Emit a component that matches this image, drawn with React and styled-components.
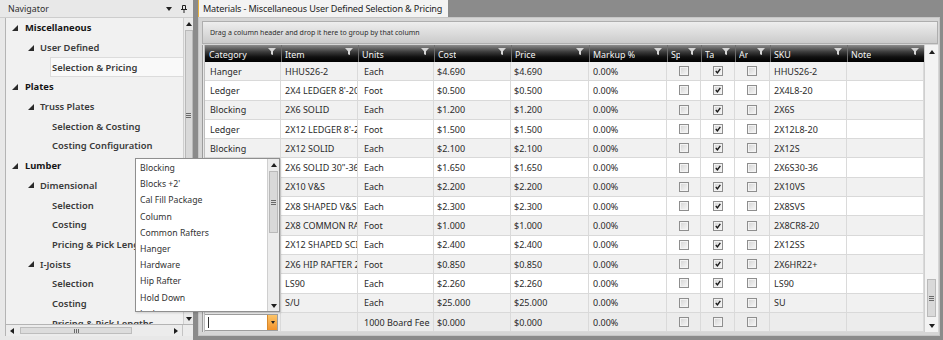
import React from 'react';
import styled, { createGlobalStyle, css } from 'styled-components';

const GlobalStyle = createGlobalStyle`
  html, body { margin: 0; padding: 0; }
  body {
    background: #8b8b8b;
    font-family: "Noto Sans", "Open Sans", sans-serif;
  }
  * { box-sizing: border-box; }
`;

const Shell = styled.div`
  position: relative;
  display: flex;
  width: 943px;
  height: 340px;
  overflow: hidden;
  background: #8b8b8b;
`;

/* ---------- navigator ---------- */

const Nav = styled.aside`
  width: 193px;
  flex: none;
  display: flex;
  flex-direction: column;
  background: #e8e8e8;
`;

const NavHeader = styled.header`
  height: 18px;
  display: flex;
  align-items: center;
  gap: 9px;
  padding: 0 6px 0 8px;
  border-bottom: 1px solid #cdcdcd;
  font-size: 8.8px;
  color: #2e2e2e;

  span { flex: 1; }
`;

const NavFrame = styled.div`
  margin-left: 5px;
  height: 307px;
  display: flex;
  border-left: 1px solid #b4b4b4;
  border-bottom: 1px solid #b4b4b4;
  background: #f1f1f1;
`;

const Tree = styled.div`
  flex: 1;
  display: flex;
  flex-direction: column;
  overflow: hidden;
`;

const TreeRow = styled.div`
  flex: none;
  height: 19.7px;
  display: flex;
  align-items: center;
  padding-left: ${p => p.$indent}px;
  font-size: 9.4px;
  font-weight: ${p => (p.$level === 0 ? 700 : 600)};
  color: ${p => (p.$level === 0 ? '#151515' : '#3a3a3a')};
  white-space: nowrap;
`;

const Expander = styled.svg`
  flex: none;
  width: 6px;
  height: 6px;
  margin-right: ${p => p.$gap}px;
`;

const TreeLabel = styled.span`
  display: flex;
  align-items: center;
  height: 100%;
  ${p => p.$leaf && css`padding-left: 2px; flex: 1;`}
  ${p => p.$selected && css`
    background: #f9f9f9;
    border: 1px solid #dcdcdc;
    border-right: none;
    padding-left: 1px;
  `}
`;

const HScroll = styled.div`
  margin-left: 5px;
  height: 11px;
  display: flex;
  align-items: center;
  background: #ececec;
  border-left: 1px solid #b4b4b4;
`;

const HTrack = styled.div`
  width: 177px;
  height: 100%;
  display: flex;
  align-items: center;
  padding: 0 4px;
  border-right: 1px solid #c4c4c4;
`;

const HThumb = styled.div`
  margin-left: 6px;
  width: 112px;
  height: 7px;
  border: 1px solid #bdbdbd;
  background: #dcdcdc;
  display: flex;
  align-items: center;
  justify-content: center;
  gap: 1px;

  i { width: 1px; height: 4px; background: #6a6a6a; }
`;

const Spacer = styled.span`
  flex: 1;
`;

/* ---------- scroll bars ---------- */

const VScroll = styled.div`
  flex: none;
  width: ${p => p.$w}px;
  display: flex;
  flex-direction: column;
  align-items: center;
  background: ${p => p.$bg || '#eaeaea'};
  border-left: 1px solid #cfcfcf;
`;

const ArrowBox = styled.div`
  flex: none;
  height: ${p => p.$h}px;
  width: 100%;
  display: flex;
  align-items: center;
  justify-content: center;
`;

const VTrack = styled.div`
  flex: 1;
  width: 100%;
  display: flex;
  flex-direction: column;
  align-items: center;
`;

const VThumb = styled.div`
  margin-top: ${p => p.$top}px;
  height: ${p => p.$size}px;
  width: ${p => p.$w}px;
  border: 1px solid #b9b9b9;
  background: #d9d9d9;
  display: flex;
  flex-direction: column;
  align-items: center;
  justify-content: center;
  gap: 1px;

  i { width: 5px; height: 1px; background: #6a6a6a; }
`;

const Arrow = ({ dir }) => {
  const pts = {
    up: '0,4 3,0 6,4',
    down: '0,0 6,0 3,4',
    left: '4,0 4,6 0,3',
    right: '0,0 0,6 4,3',
  }[dir];
  const horiz = dir === 'left' || dir === 'right';
  return (
    <svg width={horiz ? 4 : 6} height={horiz ? 6 : 4} viewBox={horiz ? '0 0 4 6' : '0 0 6 4'}>
      <polygon points={pts} fill="#1e1e1e" />
    </svg>
  );
};

const ScrollBar = ({ w, bg, arrowH, top, size, thumbW }) => (
  <VScroll $w={w} $bg={bg}>
    <ArrowBox $h={arrowH}><Arrow dir="up" /></ArrowBox>
    <VTrack>
      <VThumb $top={top} $size={size} $w={thumbW}>
        <i /><i /><i />
      </VThumb>
    </VTrack>
    <ArrowBox $h={arrowH}><Arrow dir="down" /></ArrowBox>
  </VScroll>
);

/* ---------- main document ---------- */

const Main = styled.main`
  flex: 1;
  margin: 0 3px 0 5px;
  padding-bottom: 4px;
  display: flex;
  flex-direction: column;
`;

const TabStrip = styled.div`
  height: 17px;
  flex: none;
  display: flex;
`;

const Tab = styled.div`
  display: flex;
  align-items: center;
  padding: 0 6px 0 4px;
  background: #f3f3f3;
  border-left: 1px solid #e9b23e;
  font-size: 9.1px;
  letter-spacing: -0.15px;
  color: #1e1e1e;
  white-space: nowrap;
`;

const Panel = styled.section`
  flex: 1;
  display: flex;
  flex-direction: column;
  border: 1px solid #c6c6c6;
  background: #d6d6d6;
  padding: 3px 1px 3px 3px;
  min-height: 0;
`;

const GroupPanel = styled.div`
  flex: none;
  height: 23px;
  margin-bottom: 1px;
  display: flex;
  align-items: center;
  padding-left: 7px;
  border: 1px solid #aeaeae;
  background: linear-gradient(#eeeeee, #cbcbcb);
  font-size: 7px;
  color: #2c2c2c;
`;

const GridArea = styled.div`
  flex: 1;
  display: flex;
  min-height: 0;
  overflow: hidden;
`;

const RowIndicator = styled.div`
  width: 3px;
  flex: none;
  background: #e6e6e6;
  border-left: 1px solid #9c9c9c;
  border-right: 1px solid #bdbdbd;
`;

const Table = styled.div`
  width: 719px;
  flex: none;
  display: flex;
  flex-direction: column;
  overflow: hidden;
`;

const COLS = '76px 77px 76px 77px 78px 78px 34px 34px 35px 77px 77px';

const HeaderRow = styled.div`
  flex: none;
  height: 17px;
  display: grid;
  grid-template-columns: ${COLS};
  background: linear-gradient(#8c8c8c 0%, #3c3c3c 40%, #111 70%, #000 100%);
`;

const HeaderCell = styled.div`
  position: relative;
  display: flex;
  align-items: flex-end;
  padding: 0 0 1px 3px;
  border-left: 1px solid ${p => (p.$first ? 'transparent' : '#6e6e6e')};
  font-size: 8.9px;
  color: #f4f4f4;
  white-space: nowrap;
  overflow: hidden;

  span {
    display: block;
    overflow: hidden;
    max-width: ${p => (p.$narrow ? '9px' : '60px')};
  }
`;

const FilterIcon = styled.svg`
  position: absolute;
  top: 3px;
  right: 5px;
  width: 8px;
  height: 7px;
`;

const Row = styled.div`
  flex: none;
  height: 19.3px;
  display: grid;
  grid-template-columns: ${COLS};
  background: ${p => (p.$newRow ? '#ececec' : p.$alt ? '#f1f1f1' : '#ffffff')};
  border-bottom: 1px solid #d9d9d9;
`;

const Cell = styled.div`
  display: flex;
  align-items: center;
  justify-content: ${p => (p.$center ? 'center' : 'flex-start')};
  padding-left: ${p => p.$pad || 0}px;
  border-right: 1px solid #dadada;
  font-size: 9px;
  color: #2a2a2a;
  white-space: nowrap;
  overflow: hidden;
`;

const Box = styled.span`
  width: 10px;
  height: 10px;
  display: flex;
  align-items: center;
  justify-content: center;
  border: 1px solid #8e8e8e;
  background: linear-gradient(135deg, #d3d3d3, #f8f8f8);
  box-shadow: inset 0 0 0 1px #f3f3f3;
`;

const CheckBox = ({ on }) => (
  <Box>
    {on && (
      <svg width="6" height="6" viewBox="0 0 6 6">
        <path d="M0.8 3.1 L2.4 4.8 L5.3 0.9" stroke="#1a1a1a" strokeWidth="1.4" fill="none" />
      </svg>
    )}
  </Box>
);

const Combo = styled.div`
  flex: 1;
  height: 17px;
  margin: 0 2px 0 -2px;
  display: flex;
  border: 1px solid #9e9e9e;
  background: #fff;
`;

const Caret = styled.div`
  width: 1px;
  height: 11px;
  margin: 2px 0 0 4px;
  background: #333;
`;

const ComboButton = styled.div`
  margin-left: auto;
  width: 10px;
  display: flex;
  align-items: center;
  justify-content: center;
  background: linear-gradient(#fcc56a, #f2922a);
  border-left: 1px solid #d88a2c;

  svg { width: 4px; height: 3px; }
`;

/* ---------- dropdown popup ---------- */

const Popup = styled.div`
  position: absolute;
  left: 135px;
  top: 158px;
  width: 145px;
  height: 154px;
  display: flex;
  background: #fff;
  border: 1px solid #8f8f8f;
  box-shadow: 1px 1px 2px rgba(0, 0, 0, 0.15);
  z-index: 2;
`;

const PopupList = styled.ul`
  flex: 1;
  margin: 0;
  padding: 1px 0 0 4px;
  list-style: none;
  overflow: hidden;
`;

const PopupItem = styled.li`
  height: 16.2px;
  display: flex;
  align-items: center;
  font-size: 8.7px;
  color: #333;
  white-space: nowrap;
`;

/* ---------- data ---------- */

const tree = [
  { level: 0, label: 'Miscellaneous' },
  { level: 1, label: 'User Defined' },
  { level: 2, label: 'Selection & Pricing', selected: true },
  { level: 0, label: 'Plates' },
  { level: 1, label: 'Truss Plates' },
  { level: 2, label: 'Selection & Costing' },
  { level: 2, label: 'Costing Configuration' },
  { level: 0, label: 'Lumber' },
  { level: 1, label: 'Dimensional' },
  { level: 2, label: 'Selection' },
  { level: 2, label: 'Costing' },
  { level: 2, label: 'Pricing & Pick Lengths' },
  { level: 1, label: 'I-Joists' },
  { level: 2, label: 'Selection' },
  { level: 2, label: 'Costing' },
  { level: 2, label: 'Pricing & Pick Lengths' },
];

const columns = [
  { title: 'Category' },
  { title: 'Item' },
  { title: 'Units' },
  { title: 'Cost' },
  { title: 'Price' },
  { title: 'Markup %' },
  { title: 'Special', narrow: true },
  { title: 'Taxable', narrow: true },
  { title: 'Archived', narrow: true },
  { title: 'SKU' },
  { title: 'Note' },
];

const items = [
  ['Hanger', 'HHUS26-2', 'Each', '$4.690', 'HHUS26-2'],
  ['Ledger', "2X4 LEDGER 8'-20'", 'Foot', '$0.500', '2X4L8-20'],
  ['Blocking', '2X6 SOLID', 'Each', '$1.200', '2X6S'],
  ['Ledger', "2X12 LEDGER 8'-20'", 'Foot', '$1.500', '2X12L8-20'],
  ['Blocking', '2X12 SOLID', 'Each', '$2.100', '2X12S'],
  ['Blocking', '2X6 SOLID 30"-36"', 'Each', '$1.650', '2X6S30-36'],
  ['Blocking', '2X10 V&S', 'Each', '$2.200', '2X10VS'],
  ['Blocking', '2X8 SHAPED V&S', 'Each', '$2.300', '2X8SVS'],
  ['Common Rafters', '2X8 COMMON RAFTER', 'Foot', '$1.000', '2X8CR8-20'],
  ['Blocking', '2X12 SHAPED SCISSOR', 'Each', '$2.400', '2X12SS'],
  ['Hip Rafter', '2X6 HIP RAFTER 22+', 'Foot', '$0.850', '2X6HR22+'],
  ['Hanger', 'LS90', 'Each', '$2.260', 'LS90'],
  ['Hardware', 'S/U', 'Each', '$25.000', 'SU'],
];

const categories = [
  'Blocking', "Blocks +2'", 'Cal Fill Package', 'Column', 'Common Rafters',
  'Hanger', 'Hardware', 'Hip Rafter', 'Hold Down', 'Ledger',
];

const Funnel = () => (
  <FilterIcon viewBox="0 0 8 7">
    <polygon points="0,0 8,0 5,3.2 5,7 3,6.2 3,3.2" fill="#d6d6d6" />
  </FilterIcon>
);

const DataRow = ({ row, index }) => {
  const [cat, item, units, cost, sku] = row;
  return (
    <Row $alt={index % 2 === 0}>
      <Cell $pad={5}>{cat}</Cell>
      <Cell $pad={4}>{item}</Cell>
      <Cell $pad={6}>{units}</Cell>
      <Cell $pad={3}>{cost}</Cell>
      <Cell $pad={3}>{cost}</Cell>
      <Cell $pad={4}>0.00%</Cell>
      <Cell $center><CheckBox /></Cell>
      <Cell $center><CheckBox on /></Cell>
      <Cell $center><CheckBox /></Cell>
      <Cell $pad={4}>{sku}</Cell>
      <Cell $pad={4} />
    </Row>
  );
};

export default function App() {
  return (
    <>
      <GlobalStyle />
      <Shell>
        <Nav>
          <NavHeader>
            <span>Navigator</span>
            <svg width="6" height="4" viewBox="0 0 6 4"><polygon points="0,0 6,0 3,4" fill="#222" /></svg>
            <svg width="6" height="8" viewBox="0 0 6 8">
              <path d="M1.5 0.5 H4.5 V4.5 H1.5 Z M0 4.5 H6 M3 4.5 V8" stroke="#222" strokeWidth="1" fill="none" />
            </svg>
          </NavHeader>
          <NavFrame>
            <Tree>
              {tree.map((n, i) => (
                <TreeRow key={i} $level={n.level} $indent={n.level === 2 ? 44 : 6 + n.level * 16}>
                  {n.level < 2 && (
                    <Expander viewBox="0 0 6 6" $gap={n.level === 0 ? 7 : 6}>
                      <polygon points="6,0 6,6 0,6" fill="#2a2a2a" />
                    </Expander>
                  )}
                  <TreeLabel $leaf={n.level === 2} $selected={n.selected}>{n.label}</TreeLabel>
                </TreeRow>
              ))}
            </Tree>
            <ScrollBar w={10} arrowH={11} top={1} size={170} thumbW={8} />
          </NavFrame>
          <HScroll>
            <HTrack>
              <Arrow dir="left" />
              <HThumb><i /><i /><i /></HThumb>
              <Spacer />
              <Arrow dir="right" />
            </HTrack>
          </HScroll>
        </Nav>

        <Main>
          <TabStrip>
            <Tab>Materials - Miscellaneous User Defined Selection &amp; Pricing</Tab>
          </TabStrip>
          <Panel>
            <GroupPanel>Drag a column header and drop it here to group by that column</GroupPanel>
            <GridArea>
              <RowIndicator />
              <Table>
                <HeaderRow>
                  {columns.map((c, i) => (
                    <HeaderCell key={c.title} $first={i === 0} $narrow={c.narrow}>
                      <span>{c.title}</span>
                      <Funnel />
                    </HeaderCell>
                  ))}
                </HeaderRow>
                {items.map((r, i) => (
                  <DataRow key={i} row={r} index={i} />
                ))}
                <Row $newRow>
                  <Cell>
                    <Combo>
                      <Caret />
                      <ComboButton>
                        <svg viewBox="0 0 4 3"><polygon points="0,0 4,0 2,3" fill="#222" /></svg>
                      </ComboButton>
                    </Combo>
                  </Cell>
                  <Cell $pad={4} />
                  <Cell $pad={6}>1000 Board Fee</Cell>
                  <Cell $pad={3}>$0.000</Cell>
                  <Cell $pad={3}>$0.000</Cell>
                  <Cell $pad={4}>0.00%</Cell>
                  <Cell $center><CheckBox /></Cell>
                  <Cell $center><CheckBox /></Cell>
                  <Cell $center><CheckBox /></Cell>
                  <Cell $pad={4} />
                  <Cell $pad={4} />
                </Row>
              </Table>
              <ScrollBar w={14} bg="#f3f3f3" arrowH={13} top={221} size={38} thumbW={9} />
            </GridArea>
          </Panel>
        </Main>

        <Popup>
          <PopupList>
            {categories.map(c => (
              <PopupItem key={c}>{c}</PopupItem>
            ))}
          </PopupList>
          <ScrollBar w={12} bg="#ececec" arrowH={11} top={1} size={62} thumbW={9} />
        </Popup>
      </Shell>
    </>
  );
}
